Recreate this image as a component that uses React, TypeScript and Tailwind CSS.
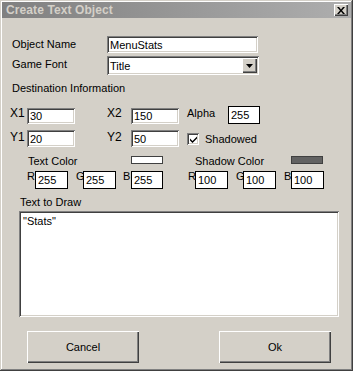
const sunken =
  "bg-white shadow-[inset_1px_1px_#808080,inset_-1px_-1px_#ffffff,inset_2px_2px_#404040,inset_-2px_-2px_#d4d0c8]";
const raised =
  "bg-[#d4d0c8] shadow-[inset_1px_1px_#ffffff,inset_-1px_-1px_#404040,inset_-2px_-2px_#808080]";

function Field({ value, className }: { value: string; className: string }) {
  return (
    <div className={`${sunken} ${className} flex items-center pl-[3px] pt-[1px]`}>
      <span>{value}</span>
    </div>
  );
}

function Flat({ value, className }: { value: string; className: string }) {
  return (
    <div className={`bg-white border border-black ${className} flex items-center pl-[2px] pt-[1px]`}>
      <span>{value}</span>
    </div>
  );
}

export default function App() {
  return (
    <div
      className="w-[353px] h-[371px] bg-[#d4d0c8] text-[11px] leading-[13px] text-black flex flex-col shadow-[inset_-1px_-1px_#404040,inset_1px_1px_#d4d0c8,inset_-2px_-2px_#808080,inset_2px_2px_#ffffff]"
      style={{ fontFamily: '"Liberation Sans", Arial, sans-serif' }}
    >
      {/* title bar */}
      <div className="mt-[2px] mx-[2px] h-[16px] bg-gradient-to-r from-[#808080] to-[#aeaeae] flex items-center pl-[4px] pr-[3px]">
        <span className="text-[12px] font-bold text-[#d4d0c8] tracking-[0.1px]">Create Text Object</span>
        <div className={`${raised} ml-auto w-[14px] h-[12px] flex items-center justify-center`}>
          <svg width="8" height="7" viewBox="0 0 8 7">
            <path d="M0 0h2l2 2.5L6 0h2L5 3.5 8 7H6L4 4.5 2 7H0l3-3.5z" fill="#000" />
          </svg>
        </div>
      </div>

      {/* object name */}
      <div className="mt-[18px] h-[17px] flex items-center">
        <span className="ml-[12px] w-[95px]">Object Name</span>
        <Field value="MenuStats" className="w-[151px] h-[17px]" />
      </div>

      {/* game font */}
      <div className="mt-[3px] h-[19px] flex items-center">
        <span className="ml-[12px] w-[95px] -mt-[3px]">Game Font</span>
        <div className={`${sunken} w-[152px] h-[19px] flex items-center pl-[3px] pr-[2px]`}>
          <span className="pt-[1px]">Title</span>
          <div className={`${raised} ml-auto w-[15px] h-[15px] flex items-center justify-center`}>
            <svg width="7" height="4" viewBox="0 0 7 4">
              <path d="M0 0h7L3.5 4z" fill="#000" />
            </svg>
          </div>
        </div>
      </div>

      <div className="mt-[7px] ml-[12px]">Destination Information</div>

      {/* X row */}
      <div className="mt-[11px] h-[18px] flex items-start">
        <span className="ml-[10px] w-[17px] text-[12px] mt-[1px]">X1</span>
        <Field value="30" className="w-[48px] h-[16px] mt-[2px]" />
        <span className="ml-[32px] w-[24px] text-[12px] mt-[1px]">X2</span>
        <Field value="150" className="w-[48px] h-[16px] mt-[2px]" />
        <span className="ml-[8px] w-[41px] mt-[1px]">Alpha</span>
        <Flat value="255" className="w-[32px] h-[18px]" />
      </div>

      {/* Y row */}
      <div className="mt-[6px] h-[17px] flex items-start">
        <span className="ml-[10px] w-[17px] text-[12px] mt-[1px]">Y1</span>
        <Field value="20" className="w-[48px] h-[17px]" />
        <span className="ml-[32px] w-[24px] text-[12px] mt-[1px]">Y2</span>
        <Field value="50" className="w-[48px] h-[17px]" />
        <div className={`${sunken} ml-[8px] mt-[3px] w-[12px] h-[12px] flex items-center justify-center`}>
          <svg width="7" height="7" viewBox="0 0 7 7">
            <path d="M0 2.5l2.5 2.5L7 0.5v2L2.5 7 0 4.5z" fill="#000" />
          </svg>
        </div>
        <span className="ml-[6px] mt-[3px]">Shadowed</span>
      </div>

      {/* colour swatches */}
      <div className="mt-[8px] h-[13px] flex items-start">
        <span className="ml-[28px] w-[103px]">Text Color</span>
        <div className="w-[32px] h-[8px] mt-[1px] bg-white border border-[#404040]" />
        <span className="ml-[32px] w-[96px]">Shadow Color</span>
        <div className="w-[32px] h-[8px] mt-[1px] bg-[#626262] border border-[#404040]" />
      </div>

      {/* rgb row */}
      <div className="mt-[3px] h-[18px] flex items-start">
        <span className="ml-[27px] w-[8px] leading-[11px]">R</span>
        <Flat value="255" className="w-[33px] h-[18px]" />
        <span className="ml-[8px] w-[7px] leading-[11px]">G</span>
        <Flat value="255" className="w-[33px] h-[18px]" />
        <span className="ml-[7px] w-[8px] leading-[11px]">B</span>
        <Flat value="255" className="w-[32px] h-[18px]" />
        <span className="ml-[25px] w-[7px] leading-[11px]">R</span>
        <Flat value="100" className="w-[33px] h-[18px]" />
        <span className="ml-[8px] w-[7px] leading-[11px]">G</span>
        <Flat value="100" className="w-[33px] h-[18px]" />
        <span className="ml-[8px] w-[7px] leading-[11px]">B</span>
        <Flat value="100" className="w-[33px] h-[18px]" />
      </div>

      <div className="mt-[7px] ml-[20px]">Text to Draw</div>

      <div className={`${sunken} mt-[2px] ml-[19px] w-[320px] h-[106px] pl-[4px] pt-[4px]`}>
        "Stats"
      </div>

      {/* buttons */}
      <div className="mt-[14px] flex">
        <div className={`${raised} ml-[27px] w-[112px] h-[32px] flex items-center justify-center`}>
          Cancel
        </div>
        <div className={`${raised} ml-[80px] w-[112px] h-[32px] flex items-center justify-center`}>
          Ok
        </div>
      </div>
    </div>
  );
}
